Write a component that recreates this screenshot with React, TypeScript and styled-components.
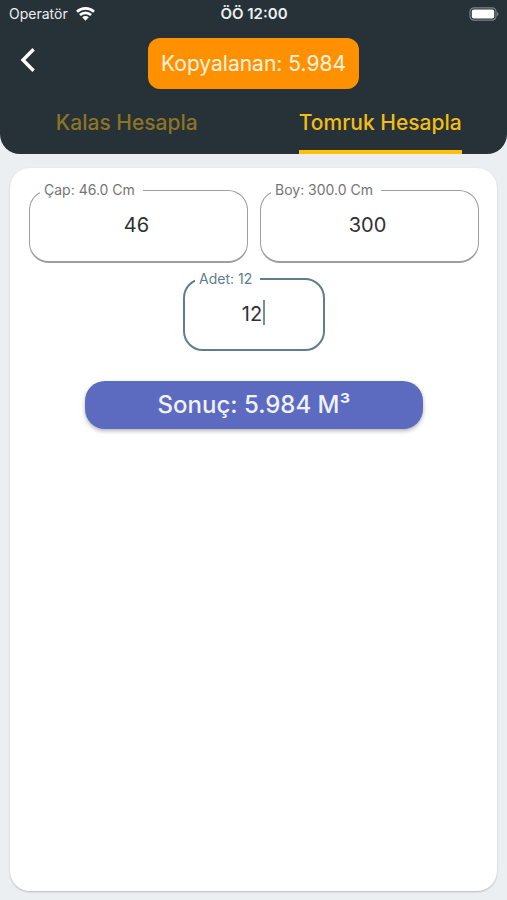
import React, { useState } from "react";
import styled, { createGlobalStyle } from "styled-components";

const GlobalStyle = createGlobalStyle`
  *, *::before, *::after { box-sizing: border-box; }
  body {
    margin: 0;
    background: #eceff1;
    font-family: Inter, "Liberation Sans", sans-serif;
  }
  button, input { font: inherit; }
`;

const Screen = styled.div`
  display: flex;
  flex-direction: column;
  min-height: 100vh;
`;

const Header = styled.header`
  background: #263238;
  border-radius: 0 0 20px 20px;
`;

const StatusBar = styled.div`
  display: grid;
  grid-template-columns: 1fr auto 1fr;
  align-items: center;
  height: 28px;
  padding: 0 8px 0 9px;
  color: #eceff1;
  font-size: 14px;
  line-height: 20px;
`;

const Carrier = styled.div`
  display: flex;
  align-items: center;
  gap: 8px;
`;

const Clock = styled.time`
  font-size: 15px;
  font-weight: 600;
`;

const BatterySlot = styled.div`
  display: flex;
  justify-content: flex-end;
`;

const AppBar = styled.div`
  display: grid;
  grid-template-columns: 1fr auto 1fr;
  padding: 10px 12px 0;
`;

const BackButton = styled.button`
  display: flex;
  align-items: center;
  justify-content: center;
  width: 32px;
  height: 44px;
  padding: 0;
  border: 0;
  background: none;
  cursor: pointer;
`;

const CopiedBadge = styled.button`
  height: 51px;
  padding: 0 13px;
  border: 0;
  border-radius: 12px;
  background: #ff9100;
  color: #fff3e0;
  font-size: 21px;
  line-height: 28px;
  cursor: pointer;
`;

const Tabs = styled.div`
  display: grid;
  grid-template-columns: 1fr 1fr;
  justify-items: center;
  height: 65px;
`;

const Tab = styled.button<{ $active: boolean }>`
  padding: 6px 0 0;
  border: 0;
  border-bottom: 4px solid ${(p) => (p.$active ? "#ffc107" : "transparent")};
  background: none;
  color: ${(p) => (p.$active ? "#f3bd14" : "#8b7425")};
  font-size: 21px;
  font-weight: 500;
  line-height: 28px;
  cursor: pointer;
`;

const Card = styled.main`
  flex: 1;
  display: flex;
  flex-direction: column;
  align-items: center;
  margin: 14px 10px 9px;
  padding: 14px 18px 24px 19px;
  border-radius: 20px;
  background: #fff;
  box-shadow: 0 1px 2px rgba(0, 0, 0, 0.22);
`;

const FieldRow = styled.div`
  display: grid;
  grid-template-columns: 1fr 1fr;
  gap: 12px;
  width: 100%;
  margin-bottom: 8px;
`;

const Field = styled.fieldset<{ $focused?: boolean }>`
  position: relative;
  min-width: 0;
  width: ${(p) => (p.$focused ? "142px" : "auto")};
  height: ${(p) => (p.$focused ? "80px" : "81px")};
  margin: 0;
  padding: 0 12px;
  border: ${(p) => (p.$focused ? "2px solid #607d8b" : "1px solid #9e9e9e")};
  border-bottom-width: 2px;
  border-radius: 20px;
  color: ${(p) => (p.$focused ? "#607d8b" : "#757575")};
`;

const Legend = styled.legend`
  margin-left: -2px;
  padding: 0 8px 0 4px;
  font-size: 14px;
  line-height: 16px;
`;

const FieldInput = styled.input`
  display: block;
  width: 100%;
  height: 53px;
  padding: 0 4px 0 0;
  border: 0;
  outline: 0;
  background: transparent;
  color: #303030;
  font-size: 20px;
  line-height: 24px;
  text-align: center;
`;

const Caret = styled.span`
  position: absolute;
  top: 13px;
  left: calc(50% + 9px);
  width: 2px;
  height: 25px;
  background: #78909c;
`;

const ResultButton = styled.button`
  width: 75%;
  height: 48px;
  margin-top: 30px;
  padding: 0;
  border: 0;
  border-radius: 20px;
  background: #5c6bc0;
  box-shadow: 0 2px 4px rgba(0, 0, 0, 0.3);
  color: #eef2ff;
  font-size: 24px;
  font-weight: 500;
  line-height: 32px;
  cursor: pointer;
`;

const WifiIcon = () => (
  <svg width="19" height="14" viewBox="0 0 19 14" aria-hidden="true">
    <path
      d="M1 4.7C5.8 .2 13.2 .2 18 4.7M3.9 8C7 5.1 12 5.1 15.1 8"
      fill="none"
      stroke="#fff"
      strokeWidth="2.6"
    />
    <path d="M6.2 10.3C8.1 8.5 10.9 8.5 12.8 10.3L9.5 13.8Z" fill="#fff" />
  </svg>
);

const BatteryIcon = () => (
  <svg width="30" height="14" viewBox="0 0 30 14" aria-hidden="true">
    <rect x="1" y=".8" width="26" height="12.4" rx="4" fill="none" stroke="#7c8589" strokeWidth="1.2" />
    <rect x="2.8" y="2.6" width="22.4" height="8.8" rx="2" fill="#fff" />
    <path d="M28.2 4.8C30 5.6 30 8.4 28.2 9.2Z" fill="#7c8589" />
  </svg>
);

const BackIcon = () => (
  <svg width="16" height="26" viewBox="0 0 16 26" aria-hidden="true">
    <path d="M13.6 2.2L3 13L13.6 23.8" fill="none" stroke="#fff" strokeWidth="3.4" />
  </svg>
);

type NumberFieldProps = {
  id: string;
  label: string;
  value: string;
  onChange: (value: string) => void;
  focused?: boolean;
};

const NumberField = ({ id, label, value, onChange, focused }: NumberFieldProps) => (
  <Field $focused={focused}>
    <Legend>
      <label htmlFor={id}>{label}</label>
    </Legend>
    <FieldInput
      id={id}
      inputMode="decimal"
      value={value}
      onChange={(e) => onChange(e.target.value)}
    />
    {focused && <Caret />}
  </Field>
);

const TIMBER_PI = 3.142;

export default function App() {
  const [tab, setTab] = useState("tomruk");
  const [diameter, setDiameter] = useState("46");
  const [length, setLength] = useState("300");
  const [count, setCount] = useState("12");

  const d = Number(diameter) || 0;
  const l = Number(length) || 0;
  const n = Number(count) || 0;
  const volume = (TIMBER_PI * (d / 200) ** 2 * (l / 100) * n).toFixed(3);

  return (
    <>
      <GlobalStyle />
      <Screen>
        <Header>
          <StatusBar>
            <Carrier>
              Operatör
              <WifiIcon />
            </Carrier>
            <Clock>ÖÖ 12:00</Clock>
            <BatterySlot>
              <BatteryIcon />
            </BatterySlot>
          </StatusBar>
          <AppBar>
            <BackButton aria-label="Geri">
              <BackIcon />
            </BackButton>
            <CopiedBadge>Kopyalanan: 5.984</CopiedBadge>
          </AppBar>
          <Tabs role="tablist">
            <Tab role="tab" aria-selected={tab === "kalas"} $active={tab === "kalas"} onClick={() => setTab("kalas")}>
              Kalas Hesapla
            </Tab>
            <Tab role="tab" aria-selected={tab === "tomruk"} $active={tab === "tomruk"} onClick={() => setTab("tomruk")}>
              Tomruk Hesapla
            </Tab>
          </Tabs>
        </Header>
        <Card>
          <FieldRow>
            <NumberField id="cap" label={`Çap: ${d.toFixed(1)} Cm`} value={diameter} onChange={setDiameter} />
            <NumberField id="boy" label={`Boy: ${l.toFixed(1)} Cm`} value={length} onChange={setLength} />
          </FieldRow>
          <NumberField id="adet" label={`Adet: ${n}`} value={count} onChange={setCount} focused />
          <ResultButton>Sonuç: {volume} M³</ResultButton>
        </Card>
      </Screen>
    </>
  );
}
